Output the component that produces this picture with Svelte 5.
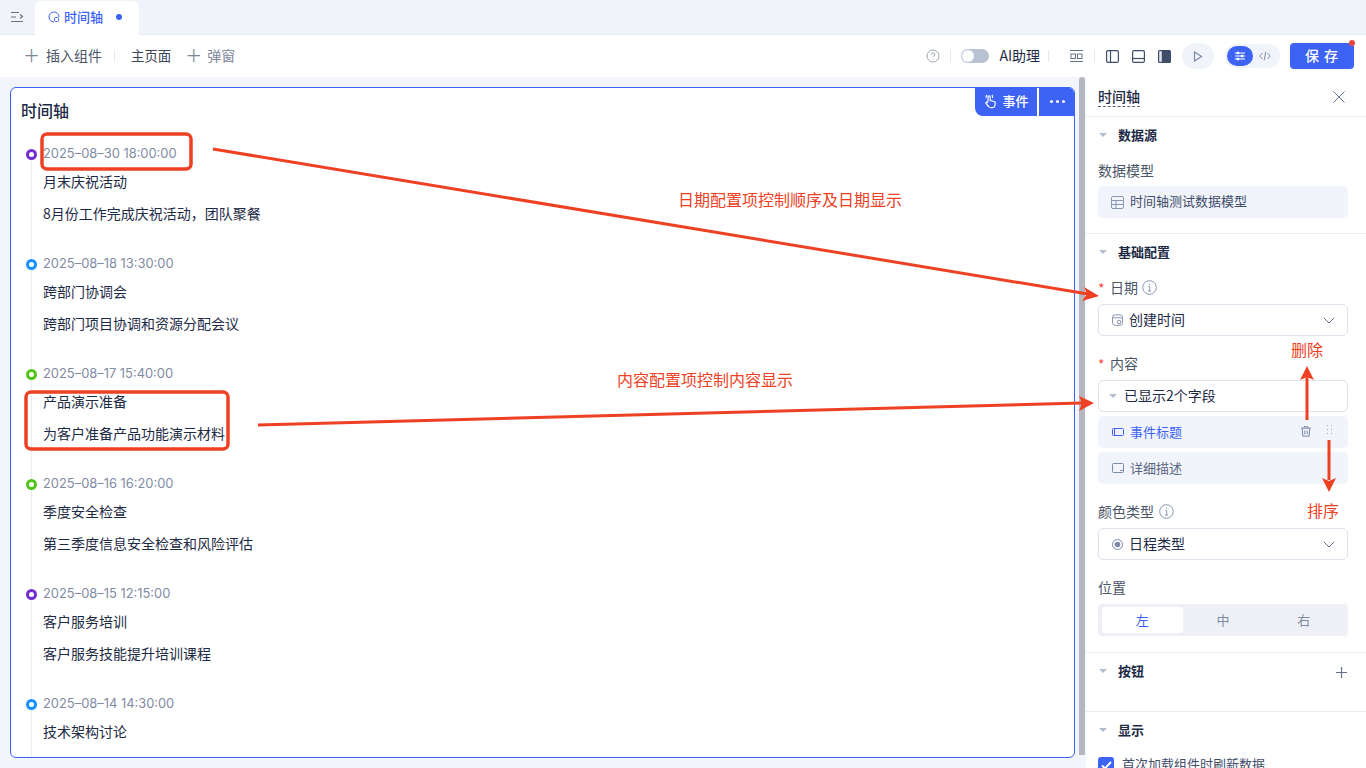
<script lang="ts">
	const events = [
		{ date: '2025–08–30 18:00:00', title: '月末庆祝活动', desc: '8月份工作完成庆祝活动，团队聚餐', color: '#722ed1' },
		{ date: '2025–08–18 13:30:00', title: '跨部门协调会', desc: '跨部门项目协调和资源分配会议', color: '#1890ff' },
		{ date: '2025–08–17 15:40:00', title: '产品演示准备', desc: '为客户准备产品功能演示材料', color: '#52c41a' },
		{ date: '2025–08–16 16:20:00', title: '季度安全检查', desc: '第三季度信息安全检查和风险评估', color: '#52c41a' },
		{ date: '2025–08–15 12:15:00', title: '客户服务培训', desc: '客户服务技能提升培训课程', color: '#722ed1' },
		{ date: '2025–08–14 14:30:00', title: '技术架构讨论', desc: '', color: '#1890ff' }
	];
</script>

<div class="app">
	<!-- tab bar -->
	<div class="tabs">
		<svg class="collapse" width="14" height="12" viewBox="0 0 14 12" fill="none" stroke="#6b7280" stroke-width="1.1">
			<path d="M1 1.5h8M1 6h5M1 10.500h12M10 3.500l2.500 2-2.500 2" />
		</svg>
		<div class="tab">
			<svg width="12" height="12" viewBox="0 0 12 12" fill="none" stroke="#3d63f5" stroke-width="1">
				<path d="M6 11A5 5 0 1 1 11 6" />
				<rect x="6.500" y="6.500" width="4" height="4" rx="1" />
			</svg>
			<span>时间轴</span>
			<i class="tab-dot"></i>
		</div>
	</div>

	<!-- toolbar -->
	<div class="toolbar">
		<button class="tool first"><span class="plus">＋</span>插入组件</button>
		<i class="sep"></i>
		<button class="tool page">主页面</button>
		<button class="tool muted"><span class="plus">＋</span>弹窗</button>
		<div class="spacer"></div>
		<svg class="help" width="14" height="14" viewBox="0 0 14 14" fill="none" stroke="#9ca3af">
			<circle cx="7" cy="7" r="6" />
			<path d="M5.300 5.500a1.700 1.700 0 1 1 2.500 1.500c-.5.300-.8.600-.8 1.200M7 9.800v.8" />
		</svg>
		<i class="sep s2"></i>
		<div class="switch"><i></i></div>
		<span class="ai">AI助理</span>
		<i class="sep s3"></i>
		<svg class="ic i1" width="13" height="14" viewBox="0 0 13 14" fill="none" stroke="#64748b">
			<path d="M0 1.500h13M0 12.500h13" />
			<rect x="1" y="5" width="4.500" height="4.500" />
			<rect x="7.500" y="5" width="4.500" height="4.500" />
		</svg>
		<i class="sep s4"></i>
		<svg class="ic i2" width="13" height="13" viewBox="0 0 13 13" fill="none" stroke="#3f4d6b" stroke-width="1.200">
			<rect x=".6" y=".6" width="11.800" height="11.800" rx="1.500" />
			<path d="M4.500 .6v11.800" />
		</svg>
		<svg class="ic i3" width="13" height="13" viewBox="0 0 13 13" fill="none" stroke="#3f4d6b" stroke-width="1.200">
			<rect x=".6" y=".6" width="11.800" height="11.800" rx="1.500" />
			<path d="M.6 8.500h11.800" />
		</svg>
		<svg class="ic i4" width="13" height="13" viewBox="0 0 13 13">
			<rect width="13" height="13" rx="1.500" fill="#3f4d6b" />
			<rect x="1.200" y="1.200" width="2.600" height="10.600" fill="#dfe3ec" />
		</svg>
		<div class="play">
			<svg width="10" height="11" viewBox="0 0 10 11" fill="none" stroke="#7b8aa8" stroke-width="1.200"><path d="M1.500 1v9l7-4.500z" /></svg>
		</div>
		<div class="mode">
			<span class="on">
				<svg width="10" height="10" viewBox="0 0 10 10" fill="none" stroke="#fff"><path d="M0 2h10M0 5h10M0 8h10" /><circle cx="3" cy="2" r="1" fill="#fff" /><circle cx="7" cy="5" r="1" fill="#fff" /><circle cx="3" cy="8" r="1" fill="#fff" /></svg>
			</span>
			<span>
				<svg width="12" height="10" viewBox="0 0 12 10" fill="none" stroke="#7b8aa8"><path d="M3.500 2L.8 5l2.700 3M8.500 2l2.700 3-2.700 3M6.800 .8L5.200 9.200" /></svg>
			</span>
		</div>
		<button class="save">保 存<i></i></button>
	</div>

	<div class="body">
		<!-- canvas -->
		<div class="canvas">
			<div class="card">
				<div class="actions">
					<span class="act-event">
						<svg width="16" height="17" viewBox="0 0 16 16" fill="none" stroke="#fff" stroke-width="1.200">
							<path d="M5 8V3.500a1.100 1.100 0 0 1 2.200 0V7l4 1a1.500 1.500 0 0 1 1.100 1.700l-.4 2.500a2.500 2.500 0 0 1-2.500 2H8a3 3 0 0 1-2.400-1.200L3 10c-.6-1 .7-2 1.500-1.200L5 9.500" />
							<path d="M3.300 4.500a2.800 2.800 0 0 1 .6-3M8.900 1.500a2.800 2.800 0 0 1 .5 3" />
						</svg>
						事件
					</span>
					<span class="act-more"><i></i><i></i><i></i></span>
				</div>
				<h2>时间轴</h2>
				<div class="timeline">
					{#each events as ev}
						<div class="item">
							<i class="dot" style="border-color: {ev.color}"></i>
							<div class="date">{ev.date}</div>
							<div class="line">{ev.title}</div>
							{#if ev.desc}<div class="line desc">{ev.desc}</div>{/if}
						</div>
					{/each}
				</div>
			</div>
		</div>
		<div class="scroll"><i></i></div>

		<!-- settings panel -->
		<aside class="panel">
			<div class="panel-head">
				<span class="panel-title">时间轴</span>
				<svg width="12" height="12" viewBox="0 0 12 12" fill="none" stroke="#64748b"><path d="M.5 .5l11 11M11.500 .5l-11 11" /></svg>
			</div>

			<section class="sec s-source">
				<div class="sec-title"><i class="caret"></i>数据源</div>
				<div class="label l-first">数据模型</div>
				<div class="model">
					<svg width="13" height="13" viewBox="0 0 13 13" fill="none" stroke="#8a97b1">
						<rect x=".5" y=".5" width="12" height="12" rx="1.500" />
						<path d="M.5 4.500h12M.5 8.500h12M5 4.500v8" />
					</svg>
					时间轴测试数据模型
				</div>
			</section>

			<section class="sec s-base">
				<div class="sec-title"><i class="caret"></i>基础配置</div>
				<div class="label req l-date">
					<b>*</b>日期
					<svg class="info" width="15" height="15" viewBox="0 0 15 15" fill="none" stroke="#8a97b1"><circle cx="7.500" cy="7.500" r="6.800" /><path d="M6.300 6.500h1.400v4.500M6 11h3M7.500 3.800v1.200" /></svg>
				</div>
				<div class="select">
					<svg width="11" height="12" viewBox="0 0 11 12" fill="none" stroke="#8a97b1"><rect x=".5" y=".8" width="10" height="10.500" rx="2.500" /><path d="M.5 3.800h10" /><circle cx="7" cy="8" r="1.800" /></svg>
					<span>创建时间</span>
					<svg class="chev" width="12" height="7" viewBox="0 0 12 7" fill="none" stroke="#64748b"><path d="M.7 .7L6 6l5.300-5.300" /></svg>
				</div>
				<div class="label req l-content"><b>*</b>内容</div>
				<div class="select fold"><i class="caret"></i><span>已显示2个字段</span></div>
				<div class="field active">
					<svg width="12" height="8" viewBox="0 0 12 8" fill="none" stroke="#3d63f5"><rect x=".5" y=".5" width="11" height="7" rx="1" /><path d="M2.500 .5v7" /></svg>
					<span>事件标题</span>
					<svg class="trash" width="10" height="11" viewBox="0 0 10 11" fill="none" stroke="#7b8aa8"><path d="M0 2.200h10M3 2V.7h4V2M1.200 2.200l.6 8h6.400l.6-8M3.800 4.500v3.800M6.200 4.500v3.800" /></svg>
					<svg class="grip" width="5" height="9" viewBox="0 0 5 9" fill="#9aa6bd"><rect width="1" height="1" /><rect x="4" width="1" height="1" /><rect y="4" width="1" height="1" /><rect x="4" y="4" width="1" height="1" /><rect y="8" width="1" height="1" /><rect x="4" y="8" width="1" height="1" /></svg>
				</div>
				<div class="field">
					<svg width="12" height="10" viewBox="0 0 12 10" fill="none" stroke="#7b8aa8"><rect x=".5" y=".5" width="11" height="9" rx="1" /><path d="M8 7.500h3" /></svg>
					<span>详细描述</span>
				</div>
				<div class="label l-color">
					颜色类型
					<svg class="info" width="15" height="15" viewBox="0 0 15 15" fill="none" stroke="#8a97b1"><circle cx="7.500" cy="7.500" r="6.800" /><path d="M6.300 6.500h1.400v4.500M6 11h3M7.500 3.800v1.200" /></svg>
				</div>
				<div class="select">
					<svg width="11" height="11" viewBox="0 0 11 11" fill="none" stroke="#7b8aa8"><circle cx="5.500" cy="5.500" r="5" /><circle cx="5.500" cy="5.500" r="2.800" fill="#7b8aa8" stroke="none" /></svg>
					<span>日程类型</span>
					<svg class="chev" width="12" height="7" viewBox="0 0 12 7" fill="none" stroke="#64748b"><path d="M.7 .7L6 6l5.300-5.300" /></svg>
				</div>
				<div class="label l-pos">位置</div>
				<div class="segment">
					<span class="on">左</span><span>中</span><span>右</span>
				</div>
			</section>

			<section class="sec s-btn">
				<div class="sec-title"><i class="caret"></i>按钮
					<svg class="add" width="11" height="11" viewBox="0 0 11 11" stroke="#64748b" stroke-width="1.200"><path d="M5.500 0v11M0 5.500h11" /></svg>
				</div>
			</section>

			<section class="sec s-show">
				<div class="sec-title"><i class="caret"></i>显示</div>
				<div class="check">
					<i><svg width="11" height="9" viewBox="0 0 11 9" fill="none" stroke="#fff" stroke-width="2"><path d="M1 4.500L4 7.500 10 1" /></svg></i>
					<span>首次加载组件时刷新数据</span>
				</div>
			</section>
		</aside>
	</div>

	<!-- annotations drawn over the screenshot -->
	<svg class="notes" width="1366" height="768" viewBox="0 0 1366 768" fill="none">
		<rect x="42" y="134" width="149" height="35" rx="5" stroke="#ee4023" stroke-width="3.500" />
		<rect x="26" y="392" width="202" height="57" rx="5" stroke="#ee4023" stroke-width="3.500" />
		<g stroke="#ee4023" stroke-width="3">
			<path d="M213 149L1088 294" />
			<path d="M258 425L1082 403" />
			<path d="M1307 420V376" />
			<path d="M1329 440V480" />
		</g>
		<g fill="#ee4023">
			<path d="M1099 296L1084 287 1087 294 1082 301z" />
			<path d="M1094 403L1079 396 1082 403 1079 411z" />
			<path d="M1307 366L1300 380 1307 377 1314 380z" />
			<path d="M1329 492L1322 478 1329 481 1336 478z" />
		</g>
	</svg>
	<span class="note n1">日期配置项控制顺序及日期显示</span>
	<span class="note n2">内容配置项控制内容显示</span>
	<span class="note n3">删除</span>
	<span class="note n4">排序</span>
</div>

<style>
	:global(body) {
		margin: 0;
		overflow: hidden;
		font-family: 'Noto Sans CJK SC', 'Noto Sans', sans-serif;
	}

	.app {
		position: relative;
		width: 1366px;
		height: 768px;
		overflow: hidden;
		display: flex;
		flex-direction: column;
		background: #f2f5fc;
		color: #1d2a45;
		font-size: 14px;
	}

	/* ── Tabs ── */
	.tabs {
		height: 35px;
		flex: none;
		display: flex;
		align-items: flex-end;
		background: #f1f3fb;
		border-bottom: 1px solid #e6eaf3;
		box-sizing: border-box;
	}
	.collapse {
		margin: 0 11px 11px 10px;
	}
	.tab {
		width: 104px;
		height: 34px;
		background: #fff;
		border-radius: 6px 6px 0 0;
		display: flex;
		align-items: center;
		box-sizing: border-box;
		padding: 0 0 3px 13px;
		color: #3d63f5;
		font-size: 13px;
		font-weight: 500;
		margin-bottom: -1px;
	}
	.tab span {
		margin-left: 4px;
	}
	.tab-dot {
		width: 6px;
		height: 6px;
		border-radius: 50%;
		background: #3d63f5;
		margin-left: 13px;
	}

	/* ── Toolbar ── */
	.toolbar {
		height: 42px;
		flex: none;
		background: #fff;
		display: flex;
		align-items: center;
		box-sizing: border-box;
		padding-right: 12px;
	}
	button {
		font-family: inherit;
		border: 0;
		background: none;
		padding: 0;
	}
	.tool {
		font-size: 14px;
		line-height: 20px;
		color: #4b5568;
		display: flex;
		align-items: center;
		padding-bottom: 3px;
	}
	.tool.first {
		margin-left: 23px;
	}
	.tool.page {
		margin-left: 16px;
		font-size: 13.4px;
		color: #3a4558;
	}
	.tool.muted {
		margin-left: 14px;
		color: #7d8798;
	}
	.tool.muted .plus {
		margin-right: 5px;
	}
	.plus {
		font-size: 17px;
		width: 17px;
		margin-right: 6px;
		color: #7d8798;
		line-height: 1;
	}
	.sep {
		width: 1px;
		height: 12px;
		background: #e6e9f0;
		margin-left: 12px;
	}
	.spacer {
		flex: 1;
	}
	.help {
		margin-right: 10px;
	}
	.sep.s2 {
		margin: 0 10px 0 0;
	}
	.switch {
		width: 28px;
		height: 14px;
		border-radius: 7px;
		background: #b9c2d3;
		position: relative;
	}
	.switch i {
		position: absolute;
		left: 1px;
		top: 1px;
		width: 12px;
		height: 12px;
		border-radius: 50%;
		background: #fff;
	}
	.ai {
		margin-left: 10px;
		font-size: 14px;
		line-height: 20px;
		padding-bottom: 3px;
		color: #1d2a45;
	}
	.sep.s3 {
		margin: 0 0 0 8px;
	}
	.i1 {
		margin-left: 21px;
	}
	.sep.s4 {
		margin: 0 0 0 11px;
	}
	.i2 {
		margin-left: 11px;
	}
	.i3 {
		margin-left: 13px;
	}
	.i4 {
		margin-left: 13px;
	}
	.play {
		width: 32px;
		height: 26px;
		border-radius: 13px;
		background: #f1f4fb;
		display: flex;
		align-items: center;
		justify-content: center;
		margin-left: 11px;
	}
	.mode {
		display: flex;
		width: 55px;
		height: 24px;
		border-radius: 12px;
		background: #f1f4fb;
		margin-left: 11px;
		box-sizing: border-box;
		padding: 2px;
	}
	.mode span {
		width: 26px;
		border-radius: 10px;
		display: flex;
		align-items: center;
		justify-content: center;
	}
	.mode .on {
		background: #3d63f5;
	}
	.save {
		position: relative;
		width: 64px;
		height: 26px;
		margin-left: 10px;
		border-radius: 4px;
		background: #3d63f5;
		color: #fff;
		font-size: 14px;
		font-weight: 500;
		letter-spacing: 1px;
		line-height: 20px;
		padding-bottom: 3px;
	}
	.save i {
		position: absolute;
		right: -1px;
		top: -3px;
		width: 6px;
		height: 6px;
		border-radius: 50%;
		background: #f0483e;
	}

	/* ── Body ── */
	.body {
		flex: 1;
		min-height: 0;
		display: flex;
	}
	.canvas {
		width: 1079px;
		flex: none;
		box-sizing: border-box;
		padding: 10px 4px 0 10px;
	}
	.card {
		position: relative;
		height: 671px;
		box-sizing: border-box;
		background: #fff;
		border: 1px solid #3d63f5;
		border-radius: 6px;
		overflow: hidden;
		padding: 10px 10px 0;
	}
	.card h2 {
		margin: 0;
		font-size: 16px;
		font-weight: 500;
		line-height: 24px;
		color: #1d2a45;
	}
	.actions {
		position: absolute;
		right: -1px;
		top: -1px;
		display: flex;
		height: 29px;
		gap: 2px;
		color: #fff;
		font-size: 13px;
		font-weight: 500;
	}
	.act-event {
		width: 62px;
		background: #3d63f5;
		border-radius: 0 0 0 8px;
		display: flex;
		align-items: center;
		justify-content: center;
		gap: 3px;
		line-height: 20px;
		padding-bottom: 1px;
		box-sizing: border-box;
	}
	.act-more {
		width: 36px;
		background: #3d63f5;
		border-radius: 0 8px 0 0;
		display: flex;
		align-items: center;
		justify-content: center;
		gap: 3px;
	}
	.act-more i {
		width: 3px;
		height: 3px;
		border-radius: 50%;
		background: #fff;
	}
	.timeline {
		margin-top: 22px;
	}
	.item {
		position: relative;
		height: 110px;
		box-sizing: border-box;
		padding-left: 23px;
		margin-left: -1px;
	}
	.item::before {
		content: '';
		position: absolute;
		left: 11px;
		top: 10px;
		bottom: -10px;
		width: 1px;
		background: #e8ebf2;
	}
	.dot {
		position: absolute;
		left: 6px;
		top: 5px;
		width: 11px;
		height: 11px;
		box-sizing: border-box;
		border: 3px solid;
		border-radius: 50%;
		background: #fff;
	}
	.date {
		font-family: Inter, 'Noto Sans', sans-serif;
		font-size: 12.9px;
		line-height: 20px;
		color: #7f8ba3;
	}
	.line {
		font-size: 14px;
		line-height: 20px;
		margin-top: 7px;
		color: #1d2a45;
	}
	.line.desc {
		margin-top: 12px;
	}

	/* ── Scrollbar ── */
	.scroll {
		width: 7px;
		flex: none;
		background: #f2f5fc;
	}
	.scroll i {
		display: block;
		width: 6px;
		height: 678px;
		background: #b4b7bd;
		border-radius: 3px 3px 0 0;
	}

	/* ── Panel ── */
	.panel {
		flex: 1;
		min-width: 0;
		background: #fff;
		overflow: hidden;
		font-size: 14px;
	}
	.panel-head {
		height: 40px;
		box-sizing: border-box;
		border-bottom: 1px solid #e9ecf3;
		display: flex;
		align-items: center;
		justify-content: space-between;
		padding: 0 21px 0 12px;
	}
	.panel-title {
		font-size: 14px;
		font-weight: 500;
		line-height: 20px;
		border-bottom: 1px dashed #55627a;
	}
	.sec {
		padding: 0 18px 0 12px;
		border-bottom: 1px solid #e9ecf3;
		box-sizing: border-box;
	}
	.s-source {
		height: 117px;
	}
	.s-base {
		height: 419px;
	}
	.s-btn {
		height: 59px;
	}
	.s-show {
		border: 0;
	}
	.sec-title {
		display: flex;
		align-items: center;
		height: 38px;
		padding-bottom: 3px;
		box-sizing: border-box;
		font-size: 13px;
		font-weight: 700;
		color: #1d2a45;
		position: relative;
	}
	.caret {
		width: 0;
		height: 0;
		border: 4px solid transparent;
		border-top: 4px solid #b3bccd;
		border-bottom: 0;
		margin-right: 11px;
		margin-left: 1px;
	}
	.add {
		position: absolute;
		right: 1px;
		top: 14px;
	}
	.label {
		display: flex;
		align-items: center;
		font-size: 14px;
		line-height: 20px;
		color: #4b5568;
		padding-bottom: 6px;
		margin-bottom: -6px;
	}
	.label b {
		font-weight: 400;
		color: #f0483e;
		width: 12px;
		font-size: 14px;
		line-height: 14px;
		padding-top: 2px;
	}
	.info {
		margin-left: 5px;
	}
	.req .info {
		margin-left: 4px;
	}
	.l-first {
		margin-top: 5px;
	}
	.l-date {
		margin-top: 5px;
	}
	.l-content {
		margin-top: 17px;
	}
	.l-color {
		margin-top: 17px;
	}
	.l-pos {
		margin-top: 17px;
	}
	.model {
		height: 32px;
		margin-top: 6px;
		border-radius: 5px;
		background: #f1f4fb;
		display: flex;
		align-items: center;
		gap: 6px;
		padding: 0 0 3px 13px;
		box-sizing: border-box;
		font-size: 13px;
		color: #3f4d6b;
	}
	.model svg {
		margin-top: 3px;
	}
	.select {
		height: 32px;
		margin-top: 7px;
		box-sizing: border-box;
		border: 1px solid #dde2ec;
		border-radius: 5px;
		display: flex;
		align-items: center;
		padding: 0 12px 0 13px;
		color: #1d2a45;
	}
	.select span {
		margin-left: 6px;
		flex: 1;
		line-height: 20px;
		padding-bottom: 3px;
	}
	.select.fold {
		padding-left: 10px;
	}
	.select.fold .caret {
		margin: 0;
	}
	.select.fold span {
		margin-left: 7px;
	}
	.field {
		height: 32px;
		margin-top: 4px;
		border-radius: 5px;
		background: #f1f4fb;
		display: flex;
		align-items: center;
		padding: 0 15px 0 14px;
		font-size: 13px;
		color: #5a6781;
	}
	.field span {
		margin-left: 6px;
		flex: 1;
		line-height: 20px;
	}
	.field.active {
		color: #3d63f5;
	}
	.trash {
		margin-right: 16px;
		margin-bottom: 2px;
	}
	.grip {
		margin-bottom: 5px;
		margin-right: 1px;
	}
	.segment {
		height: 32px;
		margin-top: 7px;
		background: #eff0f6;
		border-radius: 4px;
		display: flex;
		box-sizing: border-box;
		padding: 3px 4px;
		font-size: 13px;
		color: #7f8ba3;
	}
	.segment span {
		flex: 1;
		display: flex;
		align-items: center;
		justify-content: center;
		border-radius: 3px;
		padding-bottom: 2px;
	}
	.segment .on {
		background: #fff;
		color: #3d63f5;
	}
	.check {
		display: flex;
		align-items: center;
		gap: 8px;
		margin-top: 6px;
		font-size: 13px;
		color: #3f4d6b;
		line-height: 16px;
	}
	.check span {
		padding-bottom: 2px;
	}
	.check i {
		width: 16px;
		height: 16px;
		border-radius: 3px;
		background: #3d63f5;
		display: flex;
		align-items: center;
		justify-content: center;
	}

	/* ── Annotations ── */
	.notes {
		position: absolute;
		left: 0;
		top: 0;
		pointer-events: none;
	}
	.note {
		position: absolute;
		color: #ee4023;
		font-size: 16px;
		line-height: 20px;
		white-space: nowrap;
	}
	.n1 {
		left: 678px;
		top: 189px;
	}
	.n2 {
		left: 617px;
		top: 369px;
	}
	.n3 {
		left: 1291px;
		top: 339px;
	}
	.n4 {
		left: 1307px;
		top: 500px;
	}
</style>
